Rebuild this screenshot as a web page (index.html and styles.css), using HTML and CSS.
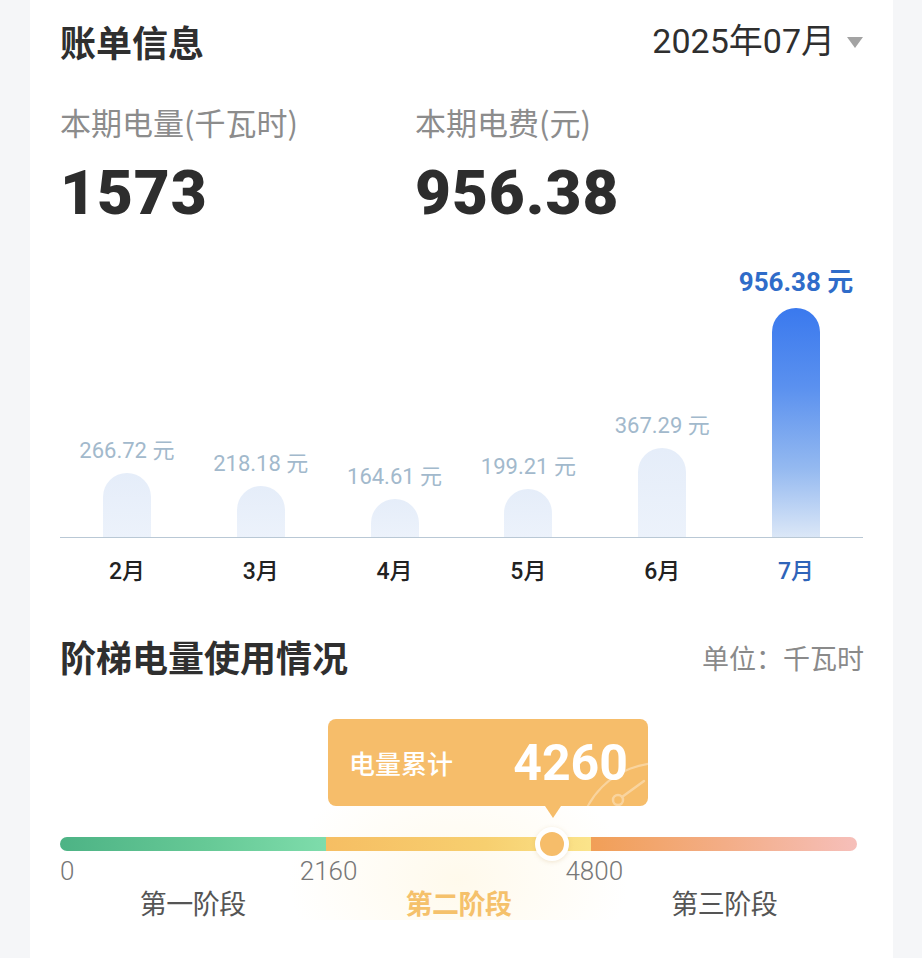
FILE: index.html
```html
<!DOCTYPE html>
<html lang="zh-CN">
<head>
<meta charset="utf-8">
<title>账单信息</title>
<link rel="stylesheet" href="styles.css">
</head>
<body>
<main class="card">
  <header class="head">
    <h1 class="title">账单信息</h1>
    <div class="month-pick"><span>2025年07月</span><span class="caret"></span></div>
  </header>

  <section class="stats">
    <div class="stat">
      <div class="stat-label">本期电量(千瓦时)</div>
      <div class="stat-value">1573</div>
    </div>
    <div class="stat">
      <div class="stat-label">本期电费(元)</div>
      <div class="stat-value">956.38</div>
    </div>
  </section>

  <section class="chart">
    <div class="plot">
      <div class="col"><div class="val">266.72 元</div><div class="bar" style="height:64px"></div></div>
      <div class="col"><div class="val">218.18 元</div><div class="bar" style="height:51px"></div></div>
      <div class="col"><div class="val">164.61 元</div><div class="bar" style="height:38px"></div></div>
      <div class="col"><div class="val">199.21 元</div><div class="bar" style="height:48px"></div></div>
      <div class="col"><div class="val">367.29 元</div><div class="bar" style="height:89px"></div></div>
      <div class="col col-active"><div class="val">956.38 元</div><div class="bar" style="height:229px"></div></div>
    </div>
    <div class="months">
      <span>2月</span><span>3月</span><span>4月</span><span>5月</span><span>6月</span><span class="month-active">7月</span>
    </div>
  </section>

  <section class="ladder">
    <div class="ladder-head">
      <h2 class="title">阶梯电量使用情况</h2>
      <span class="unit">单位：千瓦时</span>
    </div>
    <div class="scale">
      <div class="meter">
        <div class="tip" style="left:268px">
          <span class="tip-label">电量累计</span>
          <span class="tip-num">4260</span>
          <svg class="tip-deco" viewBox="0 0 320 87" width="320" height="87" aria-hidden="true">
            <circle cx="332" cy="126" r="82" fill="none" stroke="#ffffff" stroke-width="2"/>
            <line x1="294" y1="78" x2="316" y2="62" stroke="#ffffff" stroke-width="2.5" stroke-linecap="round"/>
            <circle cx="290" cy="81" r="5" fill="none" stroke="#ffffff" stroke-width="2.5"/>
          </svg>
        </div>
        <div class="track">
          <span class="seg seg1"></span><span class="seg seg2"></span><span class="seg seg3"></span>
        </div>
        <span class="knob" style="left:61.7%"></span>
      </div>
      <div class="ticks">
        <span class="tick"><span>0</span></span>
        <span class="tick tick-mid"><span>2160</span></span>
        <span class="tick tick-mid"><span>4800</span></span>
      </div>
      <div class="stages">
        <span>第一阶段</span>
        <span class="stage-active">第二阶段</span>
        <span>第三阶段</span>
      </div>
    </div>
  </section>
</main>
</body>
</html>
```

FILE: styles.css
```css
* { box-sizing: border-box; }

html, body {
  margin: 0;
  padding: 0;
}

body {
  background: #f5f6f8;
  font-family: "Noto Sans CJK SC", "Noto Sans", sans-serif;
  color: #333;
}

.card {
  margin: 0 29px 0 30px;
  min-height: 100vh;
  background: #ffffff;
  padding: 19px 30px 0 30px;
}

.head {
  display: flex;
  justify-content: space-between;
  align-items: center;
  height: 44px;
}

.title {
  margin: 0;
  font-size: 36px;
  line-height: 44px;
  font-weight: 700;
  color: #2f2f2f;
}

.month-pick {
  display: flex;
  align-items: center;
  gap: 12px;
  font-family: "Roboto", "Noto Sans CJK SC", sans-serif;
  font-size: 34px;
  line-height: 44px;
  color: #2f2f2f;
}

.caret {
  width: 0;
  height: 0;
  border-left: 8px solid transparent;
  border-right: 8px solid transparent;
  border-top: 11px solid #a3a3a3;
  margin-top: 2px;
}

.stats {
  display: grid;
  grid-template-columns: 355px 1fr;
  margin-top: 39px;
}

.stat-label {
  font-size: 31px;
  line-height: 40px;
  color: #8c8c8c;
}

.stat-value {
  margin-top: 16px;
  font-family: "Roboto", "Liberation Sans", sans-serif;
  font-size: 62px;
  font-weight: 900;
  line-height: 70px;
  letter-spacing: 1px;
  color: #2d2d2d;
}

.chart {
  margin-top: 19px;
}

.plot {
  display: grid;
  grid-template-columns: repeat(6, 1fr);
  height: 291px;
  border-bottom: 1px solid #b9c8d5;
}

.col {
  display: flex;
  flex-direction: column;
  justify-content: flex-end;
  align-items: center;
}

.val {
  font-family: "Roboto", "Noto Sans CJK SC", sans-serif;
  font-size: 22px;
  line-height: 24px;
  color: #a2b9cc;
  margin-bottom: 10px;
  white-space: nowrap;
}

.bar {
  width: 48px;
  border-radius: 24px 24px 0 0;
  background: linear-gradient(180deg, #e5edf9 0%, #ecf2fb 100%);
}

.col-active .val {
  font-size: 26px;
  line-height: 28px;
  font-weight: 700;
  color: #2f6cc9;
  margin-bottom: 12px;
}

.col-active .bar {
  background: linear-gradient(180deg, #3a79ee 0%, #5b91ef 35%, #94b9f0 70%, #dbe7f7 100%);
}

.months {
  display: grid;
  grid-template-columns: repeat(6, 1fr);
  margin-top: 19px;
  text-align: center;
  font-family: "Roboto", "Noto Sans CJK SC", sans-serif;
  font-size: 23px;
  line-height: 30px;
  font-weight: 500;
  color: #222;
}

.month-active {
  color: #2f64b9;
}

.ladder {
  margin-top: 47px;
}

.ladder-head {
  display: flex;
  justify-content: space-between;
  align-items: center;
  height: 44px;
}

.unit {
  font-size: 27px;
  line-height: 44px;
  color: #8a8a8a;
  margin-right: -1px;
  margin-top: 4px;
}

.scale {
  margin-right: 6px;
  margin-top: 41px;
  background: radial-gradient(ellipse 170px 120px at 50% 80%, rgba(255, 243, 212, 0.45), rgba(255, 255, 255, 0) 100%);
}

.meter {
  position: relative;
  padding-top: 118px;
}

.tip {
  position: absolute;
  top: 0;
  width: 320px;
  height: 87px;
  display: flex;
  align-items: center;
  justify-content: space-between;
  padding: 0 20px 0 21px;
  background: #f6bd6a;
  border-radius: 8px;
  color: #ffffff;
}

.tip::after {
  content: "";
  position: absolute;
  top: 100%;
  left: 217px;
  border-left: 8px solid transparent;
  border-right: 8px solid transparent;
  border-top: 12px solid #f6bd6a;
}

.tip-label {
  font-size: 26px;
  font-weight: 500;
  line-height: 30px;
  position: relative;
  z-index: 1;
}

.tip-num {
  font-family: "Roboto", "Liberation Sans", sans-serif;
  font-size: 50px;
  font-weight: 700;
  line-height: 56px;
  position: relative;
  z-index: 1;
}

.tip-deco {
  position: absolute;
  left: 0;
  top: 0;
  opacity: 0.35;
  border-radius: 8px;
}

.track {
  display: flex;
  height: 14px;
}

.seg {
  flex: 1;
}

.seg1 {
  border-radius: 7px 0 0 7px;
  background: linear-gradient(90deg, #4db385 0%, #66c996 55%, #7edcab 100%);
}

.seg2 {
  background: linear-gradient(90deg, #f6be63 0%, #f7cf6f 60%, #fbe48b 100%);
}

.seg3 {
  border-radius: 0 7px 7px 0;
  background: linear-gradient(90deg, #f19f57 0%, #f3ad86 50%, #f6bfba 100%);
}

.knob {
  position: absolute;
  top: 125px;
  width: 34px;
  height: 34px;
  transform: translate(-50%, -50%);
  border-radius: 50%;
  background: #f6bd6a;
  border: 5px solid #ffffff;
  box-shadow: 0 1px 4px rgba(200, 160, 90, 0.25);
}

.ticks {
  display: flex;
  margin-top: 5px;
  font-family: "Roboto", sans-serif;
  font-weight: 300;
  font-size: 26px;
  line-height: 30px;
  color: #777;
}

.tick {
  flex: 1;
}

.tick-mid span {
  display: inline-block;
  transform: translateX(-45%);
}

.stages {
  display: flex;
  text-align: center;
  font-size: 27px;
  line-height: 34px;
  color: #555;
  letter-spacing: -0.5px;
}

.stages span {
  flex: 1;
}

.stages .stage-active {
  color: #f5c16b;
  font-weight: 700;
}
```
